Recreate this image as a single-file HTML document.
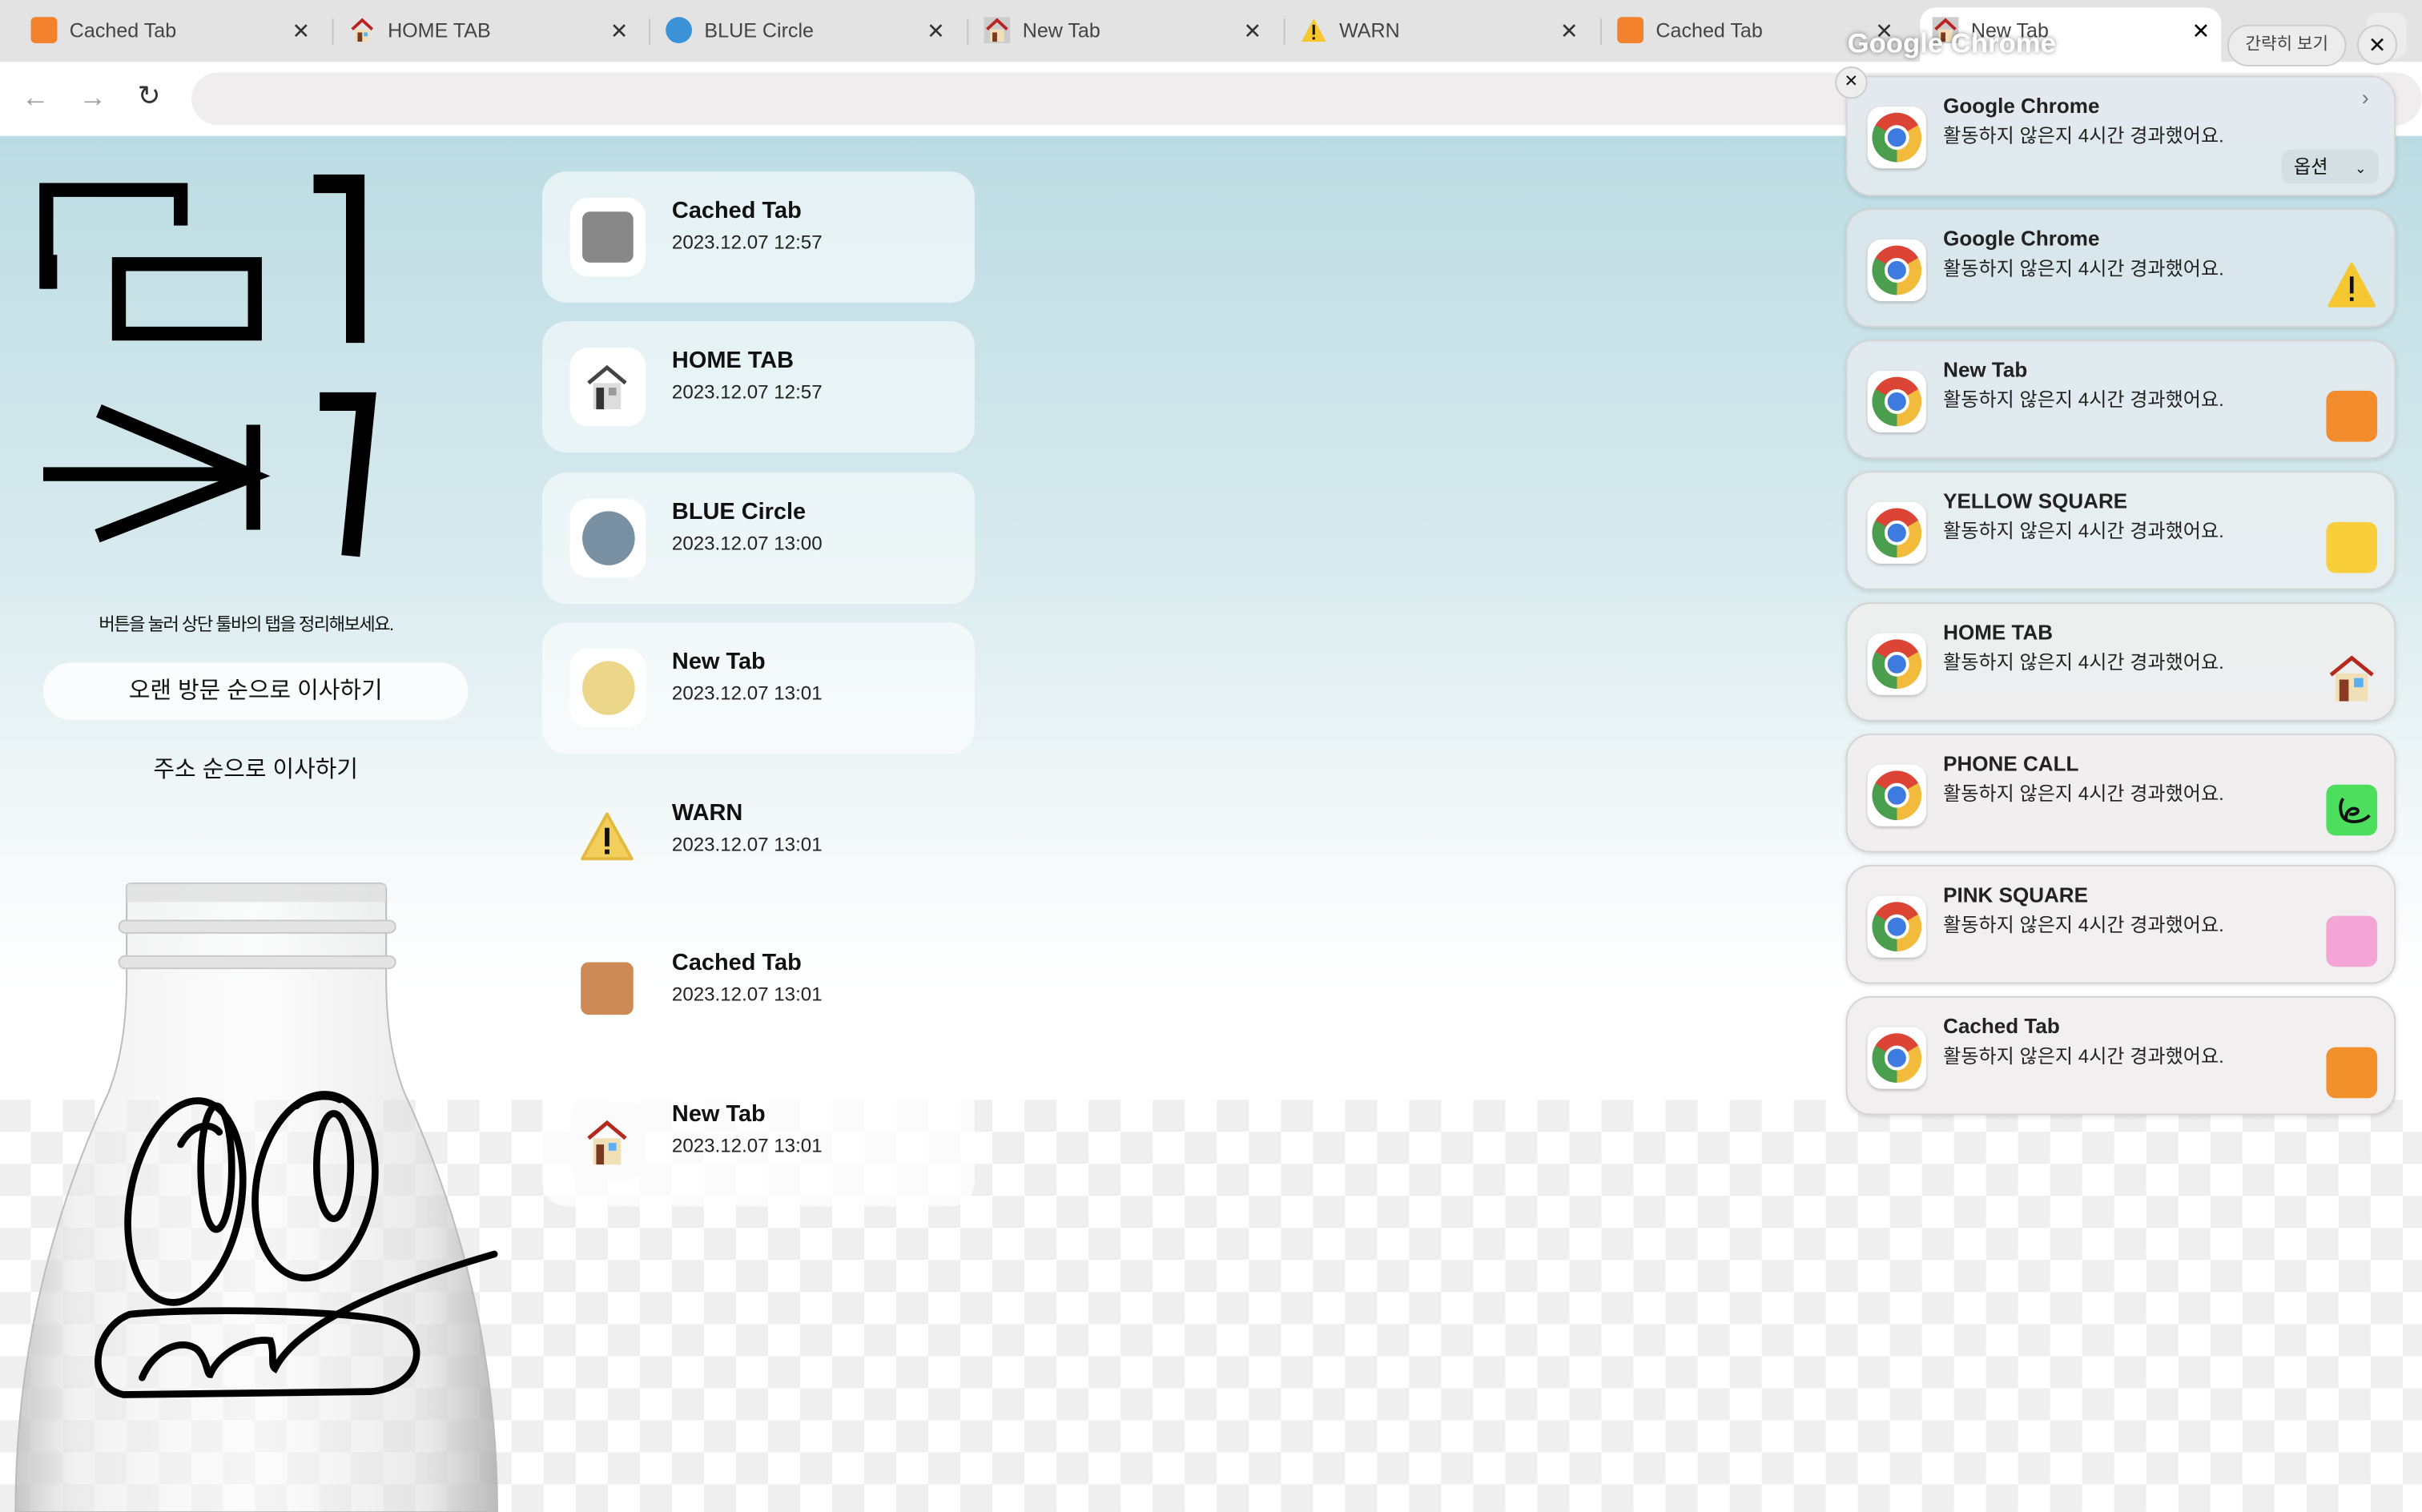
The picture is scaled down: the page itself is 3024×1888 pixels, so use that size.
<!DOCTYPE html>
<html><head><meta charset="utf-8"><style>
*{margin:0;padding:0;box-sizing:border-box;white-space:nowrap}
html,body{width:3024px;height:1888px;overflow:hidden;background:#fff}
#w{width:1568px;height:979px;transform:scale(1.928571);transform-origin:0 0;position:relative;font-family:"Liberation Sans","Noto Sans CJK KR",sans-serif;color:#111;overflow:hidden}
.abs{position:absolute}
.tabbar{left:0;top:0;width:1568px;height:40px;background:#e3e3e3}
.tab{position:absolute;top:0;width:205px;height:40px;font-size:13px;color:#444;line-height:40px}
.tab .ic{position:absolute;left:20px;top:11px;width:17px;height:17px}
.tab .t{position:absolute;left:45px;top:0}
.tab .x{position:absolute;left:170px;top:0;font-size:14px;color:#333}
.sep{position:absolute;top:12px;width:1px;height:17px;background:#c6c6c6}
.toolbar{left:0;top:40px;width:1568px;height:48px;background:#fff}
.content{left:0;top:88px;width:1568px;height:891px;background:linear-gradient(#bcdce3 0%,#d7eaee 30%,#f3f8f9 50%,#fff 62%,#fff 100%)}
.checker{left:0;top:712px;width:1568px;height:267px;background-color:#fff;background-image:linear-gradient(45deg,#efefef 25%,transparent 25%,transparent 75%,#efefef 75%),linear-gradient(45deg,#efefef 25%,transparent 25%,transparent 75%,#efefef 75%);background-size:41.5px 41.5px;background-position:20px 0,40.75px 20.75px}
.card{position:absolute;left:351px;width:280px;height:85px;border-radius:16px;background:rgba(255,255,255,.55)}
.card .ib{position:absolute;left:18px;top:17px;width:49px;height:51px;border-radius:12px;background:#fff}
.card .ti{position:absolute;left:84px;top:17px;font-size:15px;font-weight:bold}
.card .d{position:absolute;left:84px;top:39px;font-size:12.5px;color:#222}
.noti{position:absolute;left:1195px;width:356px;height:77px;border-radius:16px;background:rgba(238,238,238,.93);border:1px solid #d4d4d4;box-shadow:0 1px 3px rgba(0,0,0,.12)}
.noti .cr{position:absolute;left:13px;top:19px;width:38px;height:40px;border-radius:9px;background:#fff;box-shadow:0 1px 2px rgba(0,0,0,.2)}
.noti .cr i{position:absolute;left:3px;top:4px;width:32px;height:32px;border-radius:50%;background:conic-gradient(#dc4436 0 60deg,#f3bb3c 60deg 180deg,#4a9e4e 180deg 300deg,#dc4436 300deg)}
.noti .cr b{position:absolute;left:11px;top:12px;width:16px;height:16px;border-radius:50%;background:#3e7be0;border:2.5px solid #fff}
.noti .h{position:absolute;left:62px;top:11px;font-size:13.5px;font-weight:bold;color:#222}
.noti .m{position:absolute;left:62px;top:27px;font-size:12.5px;color:#222}
.noti .r{position:absolute;left:310px;top:32px;width:33px;height:33px;border-radius:6px}
</style></head><body><div id="w">
<div class="abs tabbar"></div>
<div class="tab" style="left:0"><div class="ic" style="background:#f2832c;border-radius:3px"></div><span class="t">Cached Tab</span><span class="x" style="left:189px">✕</span></div>
<div class="sep" style="left:215px"></div>
<div class="tab" style="left:206px"><svg class="ic" viewBox="0 0 17 17"><path d="M2 8L8.5 2L15 8" fill="none" stroke="#b22" stroke-width="2"/><rect x="4" y="8" width="9" height="8" fill="#f1dfb8"/><rect x="5.5" y="10" width="3" height="6" fill="#7a3a22"/><rect x="9.5" y="10" width="2.5" height="2.5" fill="#5ab0f0"/></svg><span class="t">HOME TAB</span><span class="x" style="left:189px">✕</span></div>
<div class="sep" style="left:420px"></div>
<div class="tab" style="left:411px"><div class="ic" style="background:#3b92d6;border-radius:50%"></div><span class="t">BLUE Circle</span><span class="x" style="left:189px">✕</span></div>
<div class="sep" style="left:626px"></div>
<div class="tab" style="left:617px"><svg class="ic" viewBox="0 0 17 17"><rect width="17" height="17" fill="#ccc"/><path d="M2 8L8.5 2L15 8" fill="none" stroke="#b22" stroke-width="2"/><rect x="4" y="8" width="9" height="8" fill="#f1dfb8"/><rect x="5.5" y="10" width="3" height="6" fill="#7a3a22"/></svg><span class="t">New Tab</span><span class="x" style="left:188px">✕</span></div>
<div class="sep" style="left:831px"></div>
<div class="tab" style="left:822px"><svg class="ic" viewBox="0 0 17 17"><path d="M8.5 1L16.5 16H0.5Z" fill="#f5c731"/><rect x="7.7" y="5" width="1.6" height="6.5" fill="#111"/><rect x="7.7" y="13" width="1.6" height="1.6" fill="#111"/></svg><span class="t">WARN</span><span class="x" style="left:188px">✕</span></div>
<div class="sep" style="left:1036px"></div>
<div class="tab" style="left:1027px"><div class="ic" style="background:#f2832c;border-radius:3px"></div><span class="t">Cached Tab</span><span class="x" style="left:187px">✕</span></div>
<div class="abs" style="left:1243px;top:5px;width:195px;height:40px;background:#fff;border-radius:10px 10px 0 0"></div>
<div class="tab" style="left:1231px"><svg class="ic" viewBox="0 0 17 17"><rect width="17" height="17" fill="#ccc"/><path d="M2 8L8.5 2L15 8" fill="none" stroke="#b22" stroke-width="2"/><rect x="4" y="8" width="9" height="8" fill="#f1dfb8"/><rect x="5.5" y="10" width="3" height="6" fill="#7a3a22"/></svg><span class="t">New Tab</span><span class="x" style="left:188px;color:#000">✕</span></div>
<div class="abs" style="left:1532px;top:8px;width:26px;height:30px;background:#ececec;border-radius:8px"></div>
<div class="abs toolbar"></div>
<div class="abs" style="left:14px;top:53px;font-size:18px;color:#999">←</div>
<div class="abs" style="left:51px;top:53px;font-size:18px;color:#999">→</div>
<div class="abs" style="left:89px;top:52px;font-size:18px;color:#333">↻</div>
<div class="abs" style="left:124px;top:47px;width:1444px;height:34px;background:#efedee;border-radius:17px"></div>
<div class="abs content"></div>
<div class="abs checker"></div>
<svg class="abs" style="left:20px;top:110px" width="230" height="260" viewBox="0 0 230 260">
<path d="M10 77V13H97V36" fill="none" stroke="#000" stroke-width="9"/>
<rect x="7" y="55" width="10" height="22" fill="#000"/>
<rect x="57" y="61" width="88" height="45" fill="none" stroke="#000" stroke-width="9"/>
<path d="M183 9H210V112" fill="none" stroke="#000" stroke-width="12"/>
<path d="M8 197H145M44 156L143 198L43 237M144 165V233" fill="none" stroke="#000" stroke-width="9"/>
<path d="M187 150H217L207 250" fill="none" stroke="#000" stroke-width="12"/>
</svg>
<div class="abs" style="left:64px;top:396px;font-size:11.5px;letter-spacing:-0.8px">버튼을 눌러 상단 툴바의 탭을 정리해보세요.</div>
<div class="abs" style="left:28px;top:429px;width:275px;height:37px;border-radius:18px;background:rgba(255,255,255,.8);text-align:center;line-height:37px;font-size:15px">오랜 방문 순으로 이사하기</div>
<div class="abs" style="left:28px;top:480px;width:275px;height:37px;text-align:center;line-height:37px;font-size:15px">주소 순으로 이사하기</div>
<svg class="abs" style="left:0;top:568px" width="340" height="411" viewBox="0 0 340 411">
<defs><linearGradient id="bg" x1="0" x2="1"><stop offset="0" stop-color="#bbb" stop-opacity=".8"/><stop offset=".12" stop-color="#e8e8e8" stop-opacity=".6"/><stop offset=".5" stop-color="#fafafa" stop-opacity=".5"/><stop offset=".85" stop-color="#ddd" stop-opacity=".6"/><stop offset="1" stop-color="#aaa" stop-opacity=".8"/></linearGradient></defs>
<path d="M82 6Q82 4 86 4H246Q250 4 250 8V65Q250 110 262 140Q322 270 322 411H10Q10 270 70 140Q82 110 82 65Z" fill="url(#bg)" stroke="#bbb" stroke-width="1"/>
<rect x="82" y="4" width="168" height="12" fill="#ddd" opacity=".7"/>
<rect x="77" y="28" width="179" height="8" rx="4" fill="#e4e4e4" stroke="#c8c8c8"/>
<rect x="77" y="51" width="179" height="8" rx="4" fill="#e4e4e4" stroke="#c8c8c8"/>
<g fill="none" stroke="#000" stroke-width="4.5" stroke-linecap="round">
<ellipse cx="120" cy="210" rx="36" ry="66" transform="rotate(10 120 210)"/>
<path d="M117 173C124 160 136 158 142 165"/>
<ellipse cx="140" cy="188" rx="10" ry="40"/>
<ellipse cx="204" cy="200" rx="38" ry="60" transform="rotate(10 204 200)"/>
<path d="M192 148C198 142 212 140 220 144"/>
<ellipse cx="216" cy="187" rx="11" ry="34"/>
<path d="M84 283C60 292 55 330 80 335L240 333C275 330 280 295 250 287C220 280 120 279 84 283"/>
<path d="M92 324C100 305 118 298 128 306C134 312 134 322 136 322C142 308 160 298 175 300C178 308 175 316 178 318C190 295 230 270 320 244"/>
</g>
</svg>
<div class="card" style="top:111px;background:rgba(255,255,255,.6)"><div class="ib"><div class="abs" style="left:8px;top:9px;width:33px;height:33px;background:#888;border-radius:5px"></div></div><div class="ti">Cached Tab</div><div class="d">2023.12.07 12:57</div></div>
<div class="card" style="top:208px"><div class="ib"><svg class="abs" style="left:10px;top:11px" width="28" height="30" viewBox="0 0 28 30"><path d="M2 12L14 2L26 12" fill="none" stroke="#444" stroke-width="2.5"/><rect x="5" y="12" width="18" height="17" fill="#ddd"/><rect x="7" y="15" width="5" height="14" fill="#333"/><rect x="15" y="15" width="5" height="5" fill="#999"/></svg></div><div class="ti">HOME TAB</div><div class="d">2023.12.07 12:57</div></div>
<div class="card" style="top:306px"><div class="ib"><div class="abs" style="left:8px;top:8px;width:34px;height:35px;background:#7990a3;border-radius:50%"></div></div><div class="ti">BLUE Circle</div><div class="d">2023.12.07 13:00</div></div>
<div class="card" style="top:403px;background:rgba(255,255,255,.6)"><div class="ib"><div class="abs" style="left:8px;top:8px;width:34px;height:35px;background:#ebd68a;border-radius:50%"></div></div><div class="ti">New Tab</div><div class="d">2023.12.07 13:01</div></div>
<div class="card" style="top:501px;background:transparent"><svg class="abs" style="left:24px;top:24px" width="36" height="34" viewBox="0 0 36 34"><path d="M18 2L34 31H2Z" fill="#f2cf5b" stroke="#e4b940" stroke-width="2" stroke-linejoin="round"/><rect x="16.5" y="11" width="3" height="12" fill="#111"/><rect x="16.5" y="25" width="3" height="3" fill="#111"/></svg><div class="ti">WARN</div><div class="d">2023.12.07 13:01</div></div>
<div class="card" style="top:598px;background:transparent"><div class="abs" style="left:25px;top:25px;width:34px;height:34px;background:#cd8a55;border-radius:5px"></div><div class="ti">Cached Tab</div><div class="d">2023.12.07 13:01</div></div>
<div class="card" style="top:696px;background:rgba(255,255,255,.75)"><div class="ib" style="background:#fbfbfb"><svg class="abs" style="left:10px;top:12px" width="28" height="30" viewBox="0 0 28 30"><path d="M2 12L14 2L26 12" fill="none" stroke="#b32a1c" stroke-width="2.5"/><rect x="5" y="12" width="18" height="17" fill="#f1dfb8"/><rect x="7" y="16" width="5" height="13" fill="#7a3a22"/><rect x="15" y="15" width="5" height="5" fill="#5ab0f0"/></svg></div><div class="ti">New Tab</div><div class="d">2023.12.07 13:01</div></div>
<div class="abs" style="left:1196px;top:18px;font-size:18px;font-weight:bold;color:#fff;text-shadow:0 0 3px rgba(0,0,0,.5)">Google Chrome</div>
<div class="abs" style="left:1442px;top:16px;width:77px;height:27px;border-radius:14px;background:#ececec;border:1px solid #ccc;font-size:11px;text-align:center;line-height:25px;color:#444">간략히 보기</div>
<div class="abs" style="left:1526px;top:16px;width:26px;height:26px;border-radius:50%;background:#ececec;border:1px solid #ccc;text-align:center;line-height:24px;font-size:14px">✕</div>
<div class="noti" style="top:49px;height:78px;background:rgba(225,233,237,.95)"><div class="cr"><i></i><b></b></div><div class="h">Google Chrome</div><div class="m">활동하지 않은지 4시간 경과했어요.</div><div class="abs" style="left:333px;top:5px;color:#777;font-size:14px">›</div><div class="abs" style="left:281px;top:47px;width:63px;height:22px;border-radius:6px;background:#d3dfe3;font-size:12px;line-height:22px;padding-left:8px">옵션 <span style="margin-left:14px;font-size:9px">⌄</span></div></div>
<div class="abs" style="left:1188px;top:43px;width:21px;height:21px;border-radius:50%;background:#eee;border:1px solid #ccc;font-size:11px;text-align:center;line-height:19px">✕</div>
<div class="noti" style="top:135px;background:rgba(218,230,235,.95)"><div class="cr"><i></i><b></b></div><div class="h">Google Chrome</div><div class="m">활동하지 않은지 4시간 경과했어요.</div><svg class="r" viewBox="0 0 33 33"><path d="M16.5 3L31 30H2Z" fill="#f5c731" stroke="#f5c731" stroke-linejoin="round" stroke-width="2"/><rect x="15.3" y="11" width="2.4" height="11" fill="#111"/><rect x="15.3" y="24.5" width="2.4" height="2.4" fill="#111"/></svg></div>
<div class="noti" style="top:220px;background:rgba(226,234,238,.95)"><div class="cr"><i></i><b></b></div><div class="h">New Tab</div><div class="m">활동하지 않은지 4시간 경과했어요.</div><div class="r" style="background:#f28c2c"></div></div>
<div class="noti" style="top:305px;background:rgba(232,238,240,.95)"><div class="cr"><i></i><b></b></div><div class="h">YELLOW SQUARE</div><div class="m">활동하지 않은지 4시간 경과했어요.</div><div class="r" style="background:#f8cf3a"></div></div>
<div class="noti" style="top:390px"><div class="cr"><i></i><b></b></div><div class="h">HOME TAB</div><div class="m">활동하지 않은지 4시간 경과했어요.</div><svg class="r" viewBox="0 0 33 33"><path d="M3 14L16.5 3L30 14" fill="none" stroke="#b32a1c" stroke-width="2.5"/><rect x="6" y="13" width="21" height="18" fill="#f1dfb8"/><rect x="8.5" y="17" width="6" height="14" fill="#8a3a22"/><rect x="18" y="16" width="6" height="6" fill="#5ab0f0"/></svg></div>
<div class="noti" style="top:475px;background:#f0eeee"><div class="cr"><i></i><b></b></div><div class="h">PHONE CALL</div><div class="m">활동하지 않은지 4시간 경과했어요.</div><div class="r" style="background:#4ede5e"><svg width="33" height="33" viewBox="0 0 33 33"><path d="M11 9C8 13 9 21 13 23C18 25 24 24 28 20M13 23C12 18 16 14 20 16C22 18 18 20 15 19" fill="none" stroke="#111" stroke-width="2"/></svg></div></div>
<div class="noti" style="top:560px;background:#f1efef"><div class="cr"><i></i><b></b></div><div class="h">PINK SQUARE</div><div class="m">활동하지 않은지 4시간 경과했어요.</div><div class="r" style="background:#f3a5d5"></div></div>
<div class="noti" style="top:645px;background:#f1efef"><div class="cr"><i></i><b></b></div><div class="h">Cached Tab</div><div class="m">활동하지 않은지 4시간 경과했어요.</div><div class="r" style="background:#f2902c"></div></div>
</div></body></html>
